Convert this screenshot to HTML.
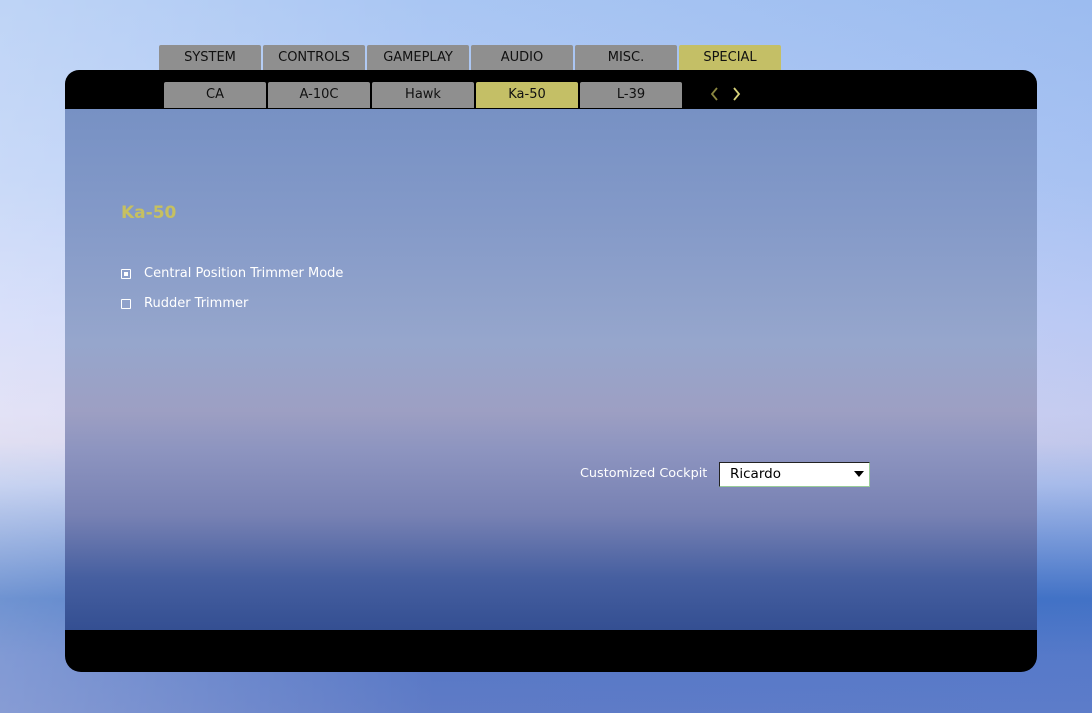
<!DOCTYPE html>
<html><head><style>
*{margin:0;padding:0;box-sizing:border-box}
body{width:1092px;height:713px;overflow:hidden;position:relative;font-family:"DejaVu Sans","Liberation Sans",sans-serif;
background:linear-gradient(180deg,#a9c6f3 0%,#b7cdf6 25%,#cdd6f8 45%,#d9d8f3 58%,#d6d4ee 62%,#b5c4ec 68%,#3f6fc2 84%,#5778c6 92%,#5f7bc6 100%);}
.bg2{position:absolute;left:0;top:0;width:1092px;height:713px;background:linear-gradient(90deg,rgba(255,255,255,0.25),rgba(255,255,255,0) 40%,rgba(80,130,220,0.15));}
.panel{position:absolute;left:65px;top:109px;width:972px;height:521px;
background:linear-gradient(180deg,#7791c4 0%,#8399c8 20%,#96a6cc 45%,#9d9fc3 58%,#8e95c0 65%,#7781b3 78%,#465fa0 90%,#344f92 100%);}
.top{position:absolute;left:65px;top:70px;width:972px;height:39px;background:#000;border-radius:14px 14px 0 0}
.bot{position:absolute;left:65px;top:630px;width:972px;height:42px;background:#000;border-radius:0 0 16px 16px}
.tab{position:absolute;height:25px;width:102px;background:#8f8f8f;color:#111;font-size:13px;text-align:center;line-height:25px;border-radius:2px 2px 0 0}
.y{background:#c4bf66}
.sub{top:82px;height:26px;line-height:26px}
.lbl{position:absolute;color:#fff;font-size:13px}
.cb{position:absolute;width:10px;height:10px;border:1.5px solid #fff;border-radius:1px}
</style></head><body>
<div class="bg2"></div>
<div class="panel"></div>
<div class="top"></div>
<div class="bot"></div>
<div class="tab" style="left:159px;top:45px">SYSTEM</div>
<div class="tab" style="left:263px;top:45px">CONTROLS</div>
<div class="tab" style="left:367px;top:45px">GAMEPLAY</div>
<div class="tab" style="left:471px;top:45px">AUDIO</div>
<div class="tab" style="left:575px;top:45px">MISC.</div>
<div class="tab y" style="left:679px;top:45px">SPECIAL</div>
<div class="tab sub" style="left:164px">CA</div>
<div class="tab sub" style="left:268px">A-10C</div>
<div class="tab sub" style="left:372px">Hawk</div>
<div class="tab sub y" style="left:476px">Ka-50</div>
<div class="tab sub" style="left:580px">L-39</div>
<svg style="position:absolute;left:706px;top:85px" width="40" height="18"><path d="M11 3 L6 9 L11 15" stroke="#8a8640" stroke-width="1.8" fill="none"/><path d="M28 3 L33 9 L28 15" stroke="#d8d37a" stroke-width="1.8" fill="none"/></svg>
<div style="position:absolute;left:121px;top:203px;color:#c6c060;font-size:17px;font-weight:bold">Ka-50</div>
<div class="cb" style="left:121px;top:269px"><div style="position:absolute;left:1.5px;top:1.5px;width:4px;height:4px;background:#fff"></div></div>
<div class="lbl" style="left:144px;top:266px">Central Position Trimmer Mode</div>
<div class="cb" style="left:121px;top:299px"></div>
<div class="lbl" style="left:144px;top:296px">Rudder Trimmer</div>
<div class="lbl" style="left:580px;top:466px;font-size:12.8px">Customized Cockpit</div>
<div style="position:absolute;left:719px;top:462px;width:151px;height:25px;background:#fff;border:1px solid #222;border-bottom-color:#9c9;border-right-color:#9c9;font-size:13.5px;line-height:23px;padding-left:10px;color:#000">Ricardo
<svg style="position:absolute;right:5px;top:8px" width="10" height="7"><path d="M0 0H10L5 6Z" fill="#000"/></svg></div>
</body></html>
